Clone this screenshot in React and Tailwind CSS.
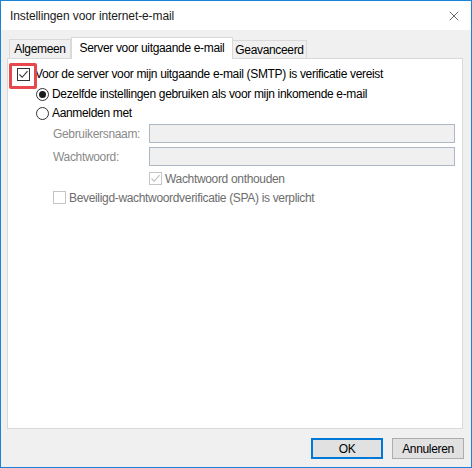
import { X } from "lucide-react"

const font = { fontFamily: '"Liberation Sans", Arial, sans-serif' }

function CheckBox({ checked, disabled }) {
    return (
        <span className={`relative flex h-[13px] w-[13px] shrink-0 items-center justify-center border bg-white ${disabled ? 'border-[#c5c5c5]' : 'border-[#333333]'}`}>
            {checked && (
                <svg width="11" height="11" viewBox="0 0 11 11" className="absolute left-0 top-0">
                    <path d="M1.5 5.5 L4.2 8.3 L9.5 2.2" fill="none" stroke={disabled ? '#bcbcbc' : '#333333'} strokeWidth="1.1" />
                </svg>
            )}
        </span>
    )
}

function Radio({ checked }) {
    return (
        <span className="flex h-[13px] w-[13px] shrink-0 items-center justify-center rounded-full border border-[#333333] bg-white">
            {checked && <span className="h-[7px] w-[7px] rounded-full bg-[#1a1a1a]" />}
        </span>
    )
}

export default function App() {
    return (
        <div className="flex h-[468px] w-[472px] flex-col border border-[#1883d7] bg-[#f0f0f0] text-[12px] tracking-[-0.33px] text-black" style={font}>
            {/* Title bar */}
            <div className="flex h-[29px] items-center justify-between bg-white pl-[9px] pr-[9px]">
                <span className="text-[12px] tracking-[-0.1px] text-[#1a1a1a]">Instellingen voor internet-e-mail</span>
                <X size={16} strokeWidth={1} className="text-[#1a1a1a]" />
            </div>

            {/* Tabs */}
            <div className="mt-[7px] flex h-[21px] items-end pl-[8px]">
                <div className="flex h-[19px] w-[62px] items-center justify-center border border-b-0 border-[#d9d9d9] bg-[#f0f0f0]">Algemeen</div>
                <div className="relative z-10 -mb-px flex h-[22px] w-[162px] items-center justify-center border border-b-0 border-[#d9d9d9] bg-white pb-[2px]">Server voor uitgaande e-mail</div>
                <div className="flex h-[18px] w-[74px] items-center justify-center border border-b-0 border-l-0 border-[#d9d9d9] bg-[#f0f0f0]">Geavanceerd</div>
            </div>

            {/* Panel */}
            <div className="relative ml-[6px] h-[371px] w-[456px] border border-[#d9d9d9] bg-white">
                <div className="absolute left-[1px] top-[4px] h-[26px] w-[28px] rounded-[2px] border-[3px] border-[#e8474c]" />

                <div className="flex flex-col pl-[9px] pt-[8px]">
                    <div className="flex h-[14px] items-center gap-[5px]">
                        <CheckBox checked />
                        <span>Voor de server voor mijn uitgaande e-mail (SMTP) is verificatie vereist</span>
                    </div>

                    <div className="ml-[19px] mt-[6px] flex flex-col">
                        <div className="flex h-[14px] items-center gap-[3px]">
                            <Radio checked />
                            <span>Dezelfde instellingen gebruiken als voor mijn inkomende e-mail</span>
                        </div>
                        <div className="mt-[5px] flex h-[14px] items-center gap-[3px]">
                            <Radio />
                            <span>Aanmelden met</span>
                        </div>

                        <div className="ml-[17px] mt-[4px] flex flex-col text-[#8a8a8a]">
                            <div className="flex items-center">
                                <span className="w-[96px]">Gebruikersnaam:</span>
                                <div className="h-[19px] w-[306px] border border-[#adb8c6] bg-[#f0f0f0]" />
                            </div>
                            <div className="mt-[4px] flex items-center">
                                <span className="w-[96px]">Wachtwoord:</span>
                                <div className="h-[19px] w-[306px] border border-[#adb8c6] bg-[#f0f0f0]" />
                            </div>
                            <div className="ml-[96px] mt-[6px] flex h-[13px] items-center gap-[3px]">
                                <CheckBox checked disabled />
                                <span className="text-[#6d6d6d]">Wachtwoord onthouden</span>
                            </div>
                            <div className="mt-[6px] flex h-[13px] items-center gap-[3px]">
                                <CheckBox disabled />
                                <span className="text-[#6d6d6d]">Beveiligd-wachtwoordverificatie (SPA) is verplicht</span>
                            </div>
                        </div>
                    </div>
                </div>
            </div>

            {/* Buttons */}
            <div className="mt-[9px] flex justify-end gap-[9px] pr-[7px]">
                <button className="h-[21px] w-[72px] border-2 border-[#0078d7] bg-[#e1e1e1]">OK</button>
                <button className="h-[21px] w-[72px] border border-[#adadad] bg-[#e1e1e1]">Annuleren</button>
            </div>
        </div>
    )
}
